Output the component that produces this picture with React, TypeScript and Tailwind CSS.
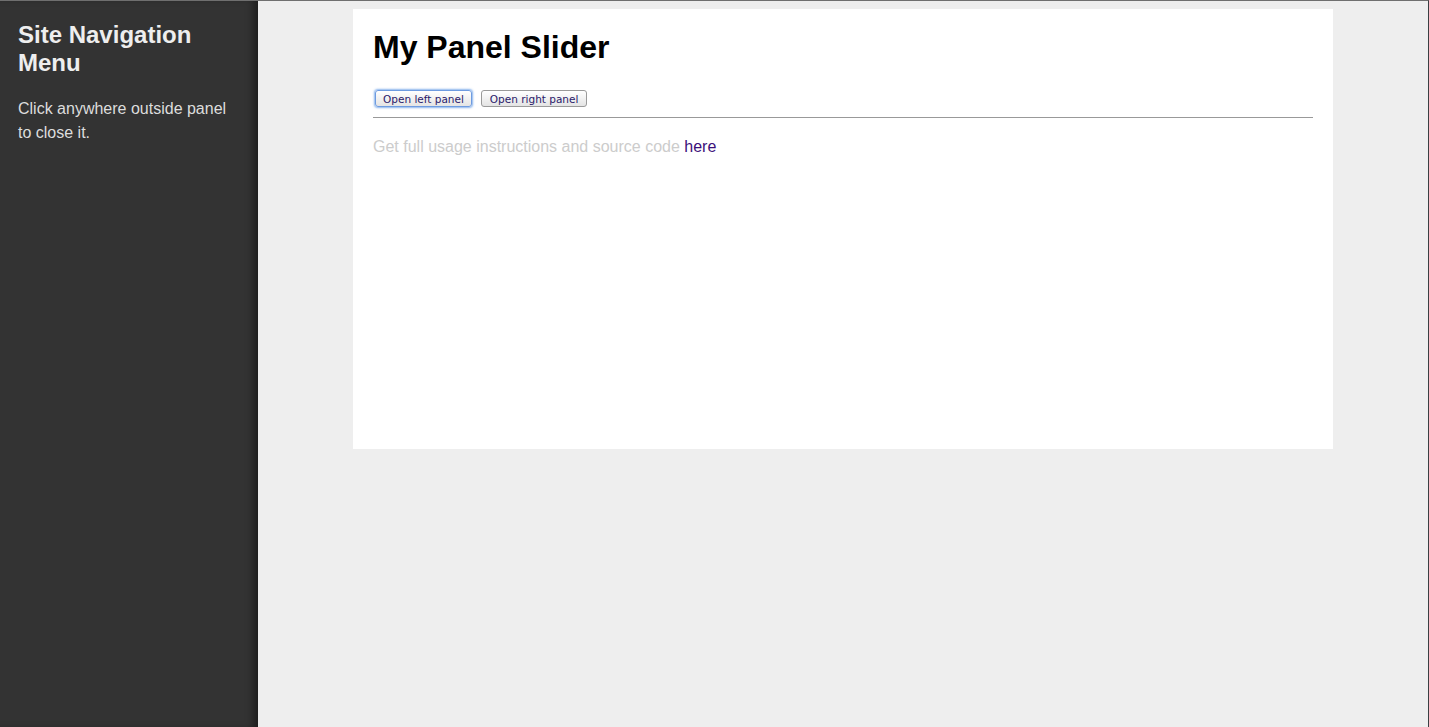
export default function App() {
  return (
    <div className="flex h-[727px] w-[1429px] overflow-hidden border-t border-r border-t-[#6f6f6f] border-r-[#3a3f42] bg-[#eeeeee] font-['Liberation_Sans',Arial,sans-serif]">
      {/* left panel */}
      <aside className="w-[258px] shrink-0 bg-[#333333] px-[18px] pt-[20px] shadow-[inset_-8px_0_8px_-4px_rgba(0,0,0,0.45)]">
        <h2 className="text-[24px] font-bold leading-[28px] text-[#eeeeee]">
          Site Navigation Menu
        </h2>
        <p className="mt-[20px] text-[16px] leading-[24px] text-[#dddddd]">
          Click anywhere outside panel to close it.
        </p>
      </aside>

      {/* main */}
      <main className="flex-1 pt-[8px] pl-[95px]">
        <div className="h-[440px] w-[980px] bg-white px-[20px] pt-[19px]">
          <h1 className="text-[32px] font-bold leading-[38px] text-black">My Panel Slider</h1>
          <div className="mt-[24px] flex gap-[9px] pl-[2px]">
            <button className="h-[17px] rounded-[3px] border border-[#6e9be0] bg-gradient-to-b from-white to-[#e4e4e4] px-[7px] font-['DejaVu_Sans',sans-serif] text-[10.5px] leading-[14px] text-[#2a1a6a] shadow-[0_0_2px_1px_rgba(90,150,230,0.7)]">
              Open left panel
            </button>
            <button className="h-[17px] rounded-[3px] border border-[#9a9a9a] bg-gradient-to-b from-white to-[#e4e4e4] px-[8px] font-['DejaVu_Sans',sans-serif] text-[10.5px] leading-[14px] text-[#2a1a6a]">
              Open right panel
            </button>
          </div>
          <hr className="mt-[10px] border-t border-[#999999]" />
          <p className="mt-[17px] text-[16px] leading-[24px] text-[#cccccc]">
            Get full usage instructions and source code{" "}
            <a href="#" className="text-[#3b0f7a]">
              here
            </a>
          </p>
        </div>
      </main>
    </div>
  );
}
